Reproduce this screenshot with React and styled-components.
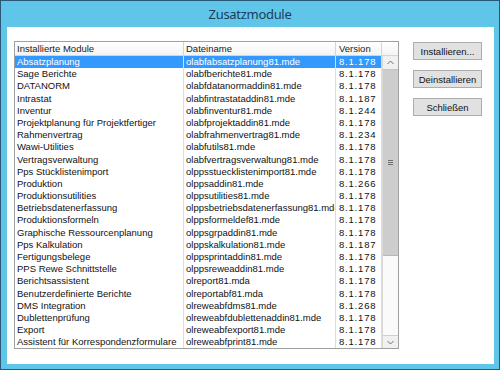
import React from 'react';
import styled, { createGlobalStyle } from 'styled-components';

const GlobalStyle = createGlobalStyle`
  html, body {
    margin: 0;
    padding: 0;
    background: #ffffff;
  }
`;

const Window = styled.div`
  width: 500px;
  height: 370px;
  box-sizing: border-box;
  border: 1px solid #2c5878;
  background: #5fc6ea;
  display: flex;
  flex-direction: column;
`;

const TitleBar = styled.div`
  height: 26px;
  display: flex;
  align-items: center;
  justify-content: center;
  font-family: 'Noto Sans', 'Open Sans', sans-serif;
  font-size: 13px;
  letter-spacing: -0.3px;
  color: #1d3b5b;
`;

const Client = styled.div`
  flex: 1;
  margin: 0 5px 5px 6px;
  background: #ffffff;
  display: flex;
  align-items: flex-start;
  padding: 14px 0 0 7px;
  gap: 14px;
  font-family: 'Liberation Sans', Arial, sans-serif;
  font-size: 9.5px;
`;

const ListBox = styled.div`
  width: 385px;
  height: 308px;
  box-sizing: border-box;
  border: 1px solid #a0a0a0;
  display: flex;
  flex-direction: column;
  overflow: hidden;
`;

const HeaderRow = styled.div`
  height: 13px;
  display: grid;
  grid-template-columns: 169px 152px 46px 1fr;
  border-bottom: 1px solid #d5d5d5;
  background: linear-gradient(#ffffff, #f4f4f4);
`;

const HeaderCell = styled.div`
  padding-left: ${(p) => p.$pad || 2}px;
  line-height: 13px;
  color: #1a1a1a;
  border-right: 1px solid #d5d5d5;
  white-space: nowrap;
  overflow: hidden;
  &:last-child {
    border-right: none;
  }
`;

const Body = styled.div`
  flex: 1;
  display: flex;
`;

const Rows = styled.div`
  width: 367px;
  display: flex;
  flex-direction: column;
`;

const Row = styled.div`
  height: 12.2px;
  display: grid;
  grid-template-columns: 169px 152px 46px;
  background: ${(p) => (p.$selected ? '#3399ff' : 'transparent')};
  color: ${(p) => (p.$selected ? '#ffffff' : '#111111')};
`;

const Cell = styled.div`
  padding-left: ${(p) => p.$pad || 2}px;
  line-height: 12.2px;
  white-space: nowrap;
  overflow: hidden;
  border-right: 1px solid #dcdcdc;
  letter-spacing: ${(p) => (p.$spaced ? '0.8px' : 'normal')};
`;

const ScrollBar = styled.div`
  width: 16px;
  border-left: 1px solid #d8d8d8;
  display: flex;
  flex-direction: column;
  background: #f4f4f4;
`;

const Arrow = styled.div`
  height: 13px;
  display: flex;
  align-items: center;
  justify-content: center;
  background: #f0f0f0;
  border-top: ${(p) => (p.$down ? '1px solid #d0d0d0' : 'none')};
`;

const Thumb = styled.div`
  height: ${(p) => p.$h}px;
  background: #cdcdcd;
  border-top: 1px solid #c4c4c4;
  border-bottom: 1px solid #b8b8b8;
  display: flex;
  flex-direction: column;
  align-items: center;
  justify-content: center;
  gap: 1px;
`;

const Grip = styled.div`
  width: 5px;
  height: 1px;
  background: #6f6f6f;
`;

const Track = styled.div`
  flex: 1;
  background: #fafafa;
`;

const ButtonColumn = styled.div`
  display: flex;
  flex-direction: column;
  gap: 10px;
  padding-top: 1px;
`;

const Button = styled.button`
  width: 69px;
  height: 18px;
  padding: 0;
  box-sizing: border-box;
  border: 1px solid #adadad;
  background: #e1e1e1;
  font-family: 'Liberation Sans', Arial, sans-serif;
  font-size: 9.5px;
  color: #111111;
`;

const Chevron = ({ down }) => (
  <svg width="7" height="5" viewBox="0 0 7 5">
    <path
      d={down ? 'M0.5 1 L3.5 4 L6.5 1' : 'M0.5 4 L3.5 1 L6.5 4'}
      fill="none"
      stroke="#707070"
      strokeWidth="1"
    />
  </svg>
);

const modules = [
  ['Absatzplanung', 'olabfabsatzplanung81.mde', '8.1.178'],
  ['Sage Berichte', 'olabfberichte81.mde', '8.1.178'],
  ['DATANORM', 'olabfdatanormaddin81.mde', '8.1.178'],
  ['Intrastat', 'olabfintrastataddin81.mde', '8.1.187'],
  ['Inventur', 'olabfinventur81.mde', '8.1.244'],
  ['Projektplanung für Projektfertiger', 'olabfprojektaddin81.mde', '8.1.178'],
  ['Rahmenvertrag', 'olabfrahmenvertrag81.mde', '8.1.234'],
  ['Wawi-Utilities', 'olabfutils81.mde', '8.1.178'],
  ['Vertragsverwaltung', 'olabfvertragsverwaltung81.mde', '8.1.178'],
  ['Pps Stücklistenimport', 'olppsstuecklistenimport81.mde', '8.1.178'],
  ['Produktion', 'olppsaddin81.mde', '8.1.266'],
  ['Produktionsutilities', 'olppsutilities81.mde', '8.1.178'],
  ['Betriebsdatenerfassung', 'olppsbetriebsdatenerfassung81.mde', '8.1.178'],
  ['Produktionsformeln', 'olppsformeldef81.mde', '8.1.178'],
  ['Graphische Ressourcenplanung', 'olppsgrpaddin81.mde', '8.1.178'],
  ['Pps Kalkulation', 'olppskalkulation81.mde', '8.1.187'],
  ['Fertigungsbelege', 'olppsprintaddin81.mde', '8.1.178'],
  ['PPS Rewe Schnittstelle', 'olppsreweaddin81.mde', '8.1.178'],
  ['Berichtsassistent', 'olreport81.mda', '8.1.178'],
  ['Benutzerdefinierte Berichte', 'olreportabf81.mda', '8.1.178'],
  ['DMS Integration', 'olreweabfdms81.mde', '8.1.268'],
  ['Dublettenprüfung', 'olreweabfdublettenaddin81.mde', '8.1.178'],
  ['Export', 'olreweabfexport81.mde', '8.1.178'],
  ['Assistent für Korrespondenzformulare', 'olreweabfprint81.mde', '8.1.178'],
];

const App = () => {
  return (
    <>
      <GlobalStyle />
      <Window>
        <TitleBar>Zusatzmodule</TitleBar>
        <Client>
          <ListBox>
            <HeaderRow>
              <HeaderCell>Installierte Module</HeaderCell>
              <HeaderCell>Dateiname</HeaderCell>
              <HeaderCell $pad={3}>Version</HeaderCell>
              <HeaderCell />
            </HeaderRow>
            <Body>
              <Rows>
                {modules.map(([name, file, version], i) => (
                  <Row key={file} $selected={i === 0}>
                    <Cell>{name}</Cell>
                    <Cell>{file}</Cell>
                    <Cell $pad={3} $spaced>
                      {version}
                    </Cell>
                  </Row>
                ))}
              </Rows>
              <ScrollBar>
                <Arrow>
                  <Chevron />
                </Arrow>
                <Thumb $h={185}>
                  <Grip />
                  <Grip />
                  <Grip />
                </Thumb>
                <Track />
                <Arrow $down>
                  <Chevron down />
                </Arrow>
              </ScrollBar>
            </Body>
          </ListBox>
          <ButtonColumn>
            <Button>Installieren...</Button>
            <Button>Deinstallieren</Button>
            <Button>Schließen</Button>
          </ButtonColumn>
        </Client>
      </Window>
    </>
  );
};

export default App;
